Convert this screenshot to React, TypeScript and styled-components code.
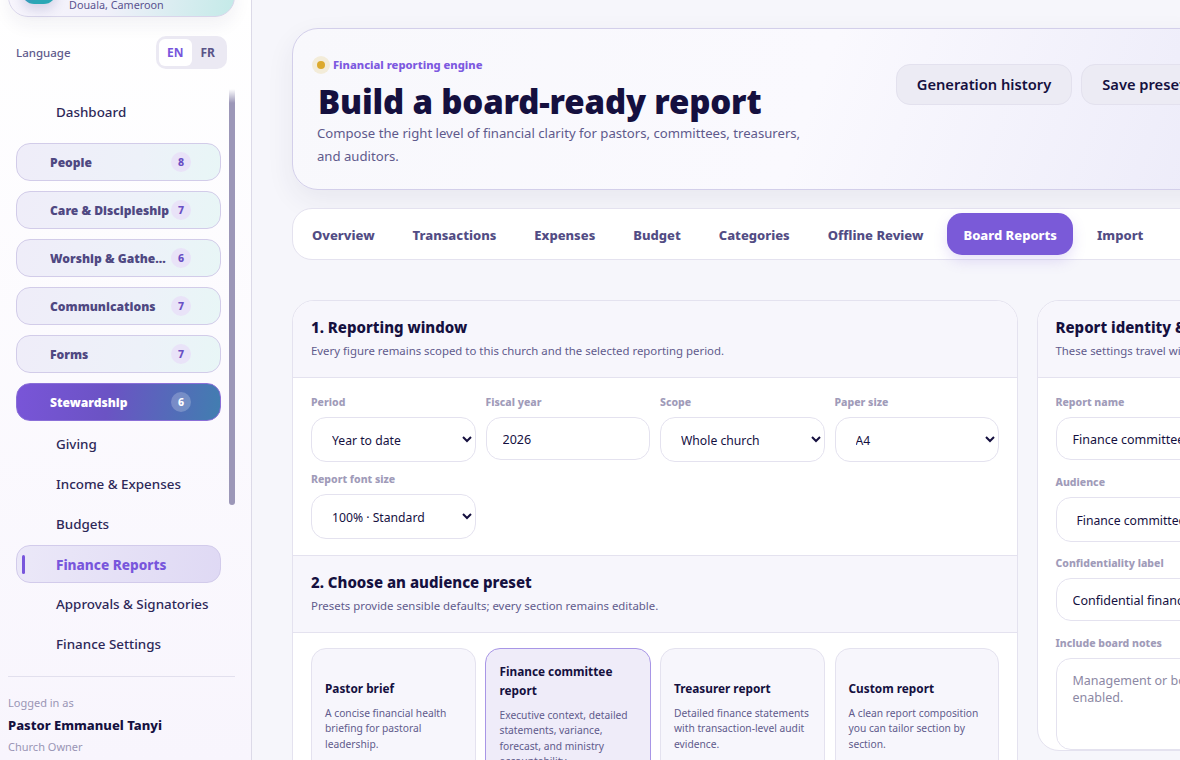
import * as React from "react"
import styled, { createGlobalStyle } from "styled-components"

const GlobalStyle = createGlobalStyle`
  html, body {
    margin: 0;
    height: 760px;
    overflow: hidden;
    font-family: "Noto Sans", "Open Sans", sans-serif;
    color: #15103f;
  }
  * { box-sizing: border-box; }
`

const Shell = styled.div`
  display: flex;
  width: 1180px;
  height: 760px;
  overflow: hidden;
  background: #f6f6fb;
`

const Sidebar = styled.aside`
  flex: 0 0 252px;
  height: 760px;
  display: flex;
  flex-direction: column;
  padding: 0 16px 0 8px;
  background: linear-gradient(180deg, #ffffff 0%, #f8f5fd 100%);
  border-right: 1px solid #dcdae8;
  overflow: hidden;
`

const ChurchCard = styled.div`
  flex: none;
  height: 70px;
  margin-top: -53px;
  display: flex;
  align-items: center;
  gap: 13px;
  padding: 0 13px;
  width: 227px;
  border: 1px solid #d9d6ea;
  border-radius: 20px;
  background: linear-gradient(100deg, #f8f6fd 0%, #f1f0fa 45%, #c4eae8 100%);
  box-shadow: 0 8px 18px rgb(40 30 90 / 6%);
`

const ChurchLogo = styled.div`
  width: 34px;
  height: 44px;
  margin-top: -1px;
  border-radius: 12px;
  background: linear-gradient(135deg, #7655d6 0%, #2aa7b5 70%);
  box-shadow: 0 6px 12px rgb(60 60 140 / 18%);
`

const ChurchPlace = styled.div`
  margin-top: 44px;
  font-size: 10.8px;
  color: #5a5390;
`

const LanguageRow = styled.div`
  flex: none;
  display: flex;
  align-items: center;
  justify-content: space-between;
  margin: 19px 8px 0 8px;
  height: 33px;
  font-size: 11.5px;
  font-weight: 500;
  color: #5f5a8c;
`

const LanguageSwitch = styled.div`
  display: flex;
  width: 71px;
  height: 33px;
  padding: 3px;
  border-radius: 10px;
  background: #ebe9f3;
`

const LanguageOption = styled.span<{ $active?: boolean }>`
  flex: 1;
  display: flex;
  align-items: center;
  justify-content: center;
  font-size: 12px;
  font-weight: 700;
  border-radius: 6px;
  color: ${(p) => (p.$active ? "#7856dc" : "#5a5488")};
  background: ${(p) => (p.$active ? "#ffffff" : "transparent")};
`

const NavArea = styled.nav`
  flex: none;
  position: relative;
  height: 586px;
  margin-top: 21px;
  padding: 0 14px 0 8px;
  display: flex;
  flex-direction: column;
`

const ScrollThumb = styled.div`
  position: absolute;
  top: -1px;
  right: 0;
  width: 6px;
  height: 416px;
  border-radius: 0 0 3px 3px;
  background: linear-gradient(180deg, #ffffff 0, #9c97b8 14px);
`

const PlainLink = styled.div`
  height: 40px;
  flex: none;
  display: flex;
  align-items: center;
  padding-left: 40px;
  font-size: 13.4px;
  font-weight: 500;
  color: #2d2858;
`

const Dashboard = styled(PlainLink)`
  margin: 2px 0 11px;
`

const CurrentLink = styled(PlainLink)`
  position: relative;
  height: 38px;
  margin: 1px 0;
  font-size: 13.6px;
  font-weight: 800;
  color: #7856dc;
  border: 1px solid #d2cbeb;
  border-radius: 14px;
  padding-left: 39px;
  background: linear-gradient(100deg, #ebe8f8 0%, #dfd9f4 100%);

  &::before {
    content: "";
    position: absolute;
    left: 5px;
    top: 9px;
    width: 3px;
    height: 19px;
    border-radius: 2px;
    background: #7856dc;
  }
`

const Group = styled.div<{ $open?: boolean }>`
  flex: none;
  height: 38px;
  display: flex;
  align-items: center;
  padding: 0 29px 0 33px;
  border-radius: 14px;
  font-size: 12.1px;
  font-weight: 900;
  border: 1px solid ${(p) => (p.$open ? "#8a6fd8" : "#d2cce9")};
  color: ${(p) => (p.$open ? "#ffffff" : "#4f4882")};
  background: ${(p) =>
    p.$open
      ? "linear-gradient(100deg, #7955d8 0%, #6b53c4 45%, #417eb0 100%)"
      : "linear-gradient(100deg, #efedf9 0%, #edf1f9 60%, #e8f6f6 100%)"};
  margin-bottom: ${(p) => (p.$open ? "3px" : "10px")};
`

const GroupName = styled.span`
  flex: 1;
  min-width: 0;
  white-space: nowrap;
  overflow: hidden;
  text-overflow: ellipsis;
`

const Count = styled.span<{ $open?: boolean }>`
  flex: none;
  width: 20px;
  height: 20px;
  border-radius: 50%;
  display: flex;
  align-items: center;
  justify-content: center;
  font-size: 10.5px;
  font-weight: 800;
  color: ${(p) => (p.$open ? "#ffffff" : "#6a4fc4")};
  background: ${(p) => (p.$open ? "rgb(255 255 255 / 22%)" : "#e9e3f8")};
`

const UserBlock = styled.div`
  flex: none;
  padding-top: 16px;
  border-top: 1px solid #e2e0ee;
  width: 227px;
`

const UserHint = styled.div`
  font-size: 11px;
  line-height: 20px;
  color: #9a95b5;
`

const UserName = styled.div`
  font-size: 13px;
  line-height: 24px;
  font-weight: 800;
  color: #15103f;
`

const Main = styled.main`
  flex: none;
  width: 1240px;
  padding: 28px 0 0 40px;
  display: flex;
  flex-direction: column;
`

const Hero = styled.header`
  flex: none;
  width: 935px;
  height: 162px;
  display: flex;
  justify-content: space-between;
  padding: 27px 20px 0 19px;
  border: 1px solid #d3cfea;
  border-radius: 26px;
  background: linear-gradient(110deg, #f8f8fc 0%, #faf9fe 55%, #ecebf9 100%);
  box-shadow: 0 10px 28px rgb(40 40 80 / 7%);
`

const Eyebrow = styled.div`
  display: flex;
  align-items: center;
  gap: 3px;
  font-size: 11.2px;
  font-weight: 800;
  line-height: 18px;
  color: #7d59e0;
`

const EyebrowDot = styled.span`
  width: 18px;
  height: 18px;
  border-radius: 50%;
  display: flex;
  align-items: center;
  justify-content: center;
  background: #f3ecd9;

  &::after {
    content: "";
    width: 8px;
    height: 8px;
    border-radius: 50%;
    background: #dca92c;
  }
`

const HeroTitle = styled.h1`
  margin: 8px 0 0 6px;
  font-size: 33px;
  line-height: 40px;
  letter-spacing: -0.17px;
  font-weight: 900;
  color: #15103f;
`

const HeroText = styled.p`
  margin: 0 0 0 5px;
  width: 500px;
  font-size: 13.15px;
  line-height: 23px;
  color: #5f5a8c;
`

const HeroActions = styled.div`
  display: flex;
  gap: 9px;
  padding-top: 8px;
  align-items: flex-start;
`

const GhostButton = styled.button`
  height: 41px;
  padding: 0 20px 2px;
  font: inherit;
  font-size: 14.7px;
  font-weight: 600;
  color: #15103f;
  white-space: nowrap;
  border: 1px solid #e3e1ee;
  border-radius: 14px;
  background: #ecebf4;
`

const Tabs = styled.div`
  flex: none;
  width: 1060px;
  height: 52px;
  margin-top: 18px;
  padding: 4px 19px;
  display: flex;
  align-items: center;
  gap: 38px;
  background: #ffffff;
  border: 1px solid #e4e2ef;
  border-radius: 20px;
`

const Tab = styled.span<{ $active?: boolean }>`
  padding-top: 1px;
  font-size: 13px;
  font-weight: 800;
  white-space: nowrap;
  color: ${(p) => (p.$active ? "#ffffff" : "#524c84")};
  ${(p) =>
    p.$active
      ? `
    height: 42px;
    padding: 1px 16px 0;
    margin: 0 -14px;
    display: flex;
    align-items: center;
    background: #7a5ad8;
    border-radius: 15px;
    box-shadow: 0 6px 14px rgb(122 90 216 / 18%);
  `
      : ""}
`

const Columns = styled.div`
  flex: none;
  margin-top: 40px;
  display: grid;
  grid-template-columns: 726px 420px;
  gap: 18.5px;
  align-items: start;
`

const Panel = styled.section`
  background: #ffffff;
  border: 1px solid #e4e2ef;
  border-radius: 22px;
  overflow: hidden;
`

const PanelHead = styled.div`
  height: 77px;
  padding: 16px 18px 0;
  background: #f7f6fc;
  border-bottom: 1px solid #e4e2ef;

  & + div + & {
    border-top: 1px solid #e4e2ef;
    height: 78px;
  }
`

const PanelTitle = styled.h2`
  margin: 0;
  font-size: 15px;
  line-height: 21px;
  font-weight: 800;
  color: #15103f;
`

const PanelHint = styled.p`
  margin: 4px 0 0;
  font-size: 11.4px;
  line-height: 18px;
  white-space: nowrap;
  color: #615b8c;
`

const FieldGrid = styled.div`
  height: 177px;
  padding: 16px 18px 0;
  display: grid;
  grid-template-columns: repeat(4, 1fr);
  column-gap: 10px;
  row-gap: 9px;
  align-content: start;
`

const Stack = styled.div`
  padding: 16px 18px 0;
  display: flex;
  flex-direction: column;
  gap: 13.5px;
`

const Field = styled.label`
  display: flex;
  flex-direction: column;
  gap: 7px;
`

const FieldLabel = styled.span`
  font-size: 10.5px;
  line-height: 16px;
  font-weight: 800;
  white-space: nowrap;
  color: #a09bb9;
`

const Select = styled.select`
  height: 45px;
  width: 100%;
  padding: 2px 4px 0 16px;
  font: inherit;
  font-size: 12.2px;
  color: #15103f;
  background: #ffffff;
  border: 1px solid #e4e2ef;
  border-radius: 15px;
`

const Input = styled.input`
  height: 43px;
  width: 100%;
  padding: 2px 16px 0;
  font: inherit;
  font-size: 12.5px;
  color: #15103f;
  background: #ffffff;
  border: 1px solid #e4e2ef;
  border-radius: 15px;
`

const Notes = styled.textarea`
  height: 92px;
  width: 100%;
  padding: 13px 16px;
  font: inherit;
  font-size: 12.5px;
  line-height: 17px;
  resize: none;
  background: #ffffff;
  border: 1px solid #e4e2ef;
  border-radius: 15px;

  &::placeholder {
    color: #8c88a4;
  }
`

const PresetGrid = styled.div`
  padding: 15px 18px 20px;
  display: grid;
  grid-template-columns: repeat(4, 1fr);
  column-gap: 10px;
`

const Preset = styled.div<{ $active?: boolean }>`
  display: flex;
  flex-direction: column;
  justify-content: center;
  gap: 7.5px;
  padding: 13px ${(p) => (p.$active ? "14px" : "13px")};
  margin: 0 ${(p) => (p.$active ? "-1px" : "0")};
  border-radius: 15px;
  border: 1px solid ${(p) => (p.$active ? "#a896e6" : "#e4e2ef")};
  background: ${(p) => (p.$active ? "#efecf9" : "#f7f6fc")};
`

const PresetName = styled.div`
  font-size: 11.8px;
  line-height: 19px;
  font-weight: 700;
  color: #15103f;
`

const PresetText = styled.div`
  font-size: 10.25px;
  line-height: 15.5px;
  color: #615b8c;
`

const groups = [
  { name: "People", count: 8 },
  { name: "Care & Discipleship", count: 7 },
  { name: "Worship & Gatherings", count: 6 },
  { name: "Communications", count: 7 },
  { name: "Forms", count: 7 },
]

const tabs = ["Overview", "Transactions", "Expenses", "Budget", "Categories", "Offline Review", "Board Reports", "Import"]

const presets = [
  { name: "Pastor brief", text: "A concise financial health briefing for pastoral leadership." },
  {
    name: "Finance committee report",
    text: "Executive context, detailed statements, variance, forecast, and ministry accountability.",
    active: true,
  },
  { name: "Treasurer report", text: "Detailed finance statements with transaction-level audit evidence." },
  { name: "Custom report", text: "A clean report composition you can tailor section by section." },
]

export default function App() {
  return (
    <>
      <GlobalStyle />
      <Shell>
        <Sidebar>
          <ChurchCard>
            <ChurchLogo />
            <ChurchPlace>Douala, Cameroon</ChurchPlace>
          </ChurchCard>
          <LanguageRow>
            Language
            <LanguageSwitch>
              <LanguageOption $active>EN</LanguageOption>
              <LanguageOption>FR</LanguageOption>
            </LanguageSwitch>
          </LanguageRow>
          <NavArea>
            <ScrollThumb />
            <Dashboard>Dashboard</Dashboard>
            {groups.map((g) => (
              <Group key={g.name}>
                <GroupName>{g.name}</GroupName>
                <Count>{g.count}</Count>
              </Group>
            ))}
            <Group $open>
              <GroupName>Stewardship</GroupName>
              <Count $open>6</Count>
            </Group>
            <PlainLink>Giving</PlainLink>
            <PlainLink>Income &amp; Expenses</PlainLink>
            <PlainLink>Budgets</PlainLink>
            <CurrentLink>Finance Reports</CurrentLink>
            <PlainLink>Approvals &amp; Signatories</PlainLink>
            <PlainLink>Finance Settings</PlainLink>
          </NavArea>
          <UserBlock>
            <UserHint>Logged in as</UserHint>
            <UserName>Pastor Emmanuel Tanyi</UserName>
            <UserHint>Church Owner</UserHint>
          </UserBlock>
        </Sidebar>
        <Main>
          <Hero>
            <div>
              <Eyebrow>
                <EyebrowDot />
                Financial reporting engine
              </Eyebrow>
              <HeroTitle>Build a board-ready report</HeroTitle>
              <HeroText>
                Compose the right level of financial clarity for pastors, committees, treasurers, and auditors.
              </HeroText>
            </div>
            <HeroActions>
              <GhostButton>Generation history</GhostButton>
              <GhostButton>Save preset</GhostButton>
            </HeroActions>
          </Hero>
          <Tabs>
            {tabs.map((t) => (
              <Tab key={t} $active={t === "Board Reports"}>
                {t}
              </Tab>
            ))}
          </Tabs>
          <Columns>
            <Panel>
              <PanelHead>
                <PanelTitle>1. Reporting window</PanelTitle>
                <PanelHint>Every figure remains scoped to this church and the selected reporting period.</PanelHint>
              </PanelHead>
              <FieldGrid>
                <Field>
                  <FieldLabel>Period</FieldLabel>
                  <Select defaultValue="Year to date">
                    <option>Year to date</option>
                  </Select>
                </Field>
                <Field>
                  <FieldLabel>Fiscal year</FieldLabel>
                  <Input defaultValue="2026" />
                </Field>
                <Field>
                  <FieldLabel>Scope</FieldLabel>
                  <Select defaultValue="Whole church">
                    <option>Whole church</option>
                  </Select>
                </Field>
                <Field>
                  <FieldLabel>Paper size</FieldLabel>
                  <Select defaultValue="A4">
                    <option>A4</option>
                  </Select>
                </Field>
                <Field>
                  <FieldLabel>Report font size</FieldLabel>
                  <Select defaultValue="100% · Standard">
                    <option>100% · Standard</option>
                  </Select>
                </Field>
              </FieldGrid>
              <PanelHead>
                <PanelTitle>2. Choose an audience preset</PanelTitle>
                <PanelHint>Presets provide sensible defaults; every section remains editable.</PanelHint>
              </PanelHead>
              <PresetGrid>
                {presets.map((p) => (
                  <Preset key={p.name} $active={p.active}>
                    <PresetName>{p.name}</PresetName>
                    <PresetText>{p.text}</PresetText>
                  </Preset>
                ))}
              </PresetGrid>
            </Panel>
            <Panel>
              <PanelHead>
                <PanelTitle>Report identity &amp; notes</PanelTitle>
                <PanelHint>These settings travel with the generated report.</PanelHint>
              </PanelHead>
              <Stack>
                <Field>
                  <FieldLabel>Report name</FieldLabel>
                  <Input defaultValue="Finance committee report" />
                </Field>
                <Field>
                  <FieldLabel>Audience</FieldLabel>
                  <Select defaultValue="Finance committee">
                    <option>Finance committee</option>
                  </Select>
                </Field>
                <Field>
                  <FieldLabel>Confidentiality label</FieldLabel>
                  <Input defaultValue="Confidential finance report" />
                </Field>
                <Field>
                  <FieldLabel>Include board notes</FieldLabel>
                  <Notes placeholder={"Management or board notes appear on the report when\nenabled."} />
                </Field>
              </Stack>
            </Panel>
          </Columns>
        </Main>
      </Shell>
    </>
  )
}
